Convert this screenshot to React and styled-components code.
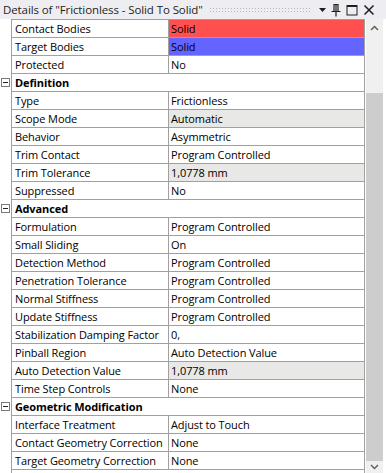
import React from "react";
import styled, { createGlobalStyle } from "styled-components";

const font = `"Open Sans", "Noto Sans", sans-serif`;
const linha = "#a0a0a0";

const Global = createGlobalStyle`
  body {
    margin: 0;
    background: #ffffff;
  }
`;

const Painel = styled.div`
  width: 386px;
  height: 473px;
  overflow: hidden;
  font-family: ${font};
  font-size: 11px;
  letter-spacing: -0.1px;
  color: #000;
  background: #fff;
`;

const Titulo = styled.div`
  height: 19px;
  display: flex;
  align-items: center;
  background: #eeeef2;
  padding-left: 3px;
  gap: 6px;
`;

const TituloTexto = styled.span`
  font-size: 11.5px;
  color: #1e1e1e;
  white-space: nowrap;
`;

const Pontilhado = styled.div`
  flex: 1;
  height: 6px;
  background-image: radial-gradient(circle at 1.5px 1.5px, #b4b4bc 0.6px, transparent 0.9px);
  background-size: 3px 3px;
`;

const Icones = styled.div`
  display: flex;
  align-items: center;
  gap: 3px;
  padding-right: 10px;
`;

const Icone = styled.svg`
  display: block;
`;

const Corpo = styled.div`
  display: flex;
`;

const Margem = styled.div`
  width: 11px;
  padding-top: 1px;
`;

const MargemLinha = styled.div`
  height: 18px;
  display: flex;
  align-items: center;
  justify-content: center;
  padding-left: 1px;
  box-sizing: border-box;
`;

const Menos = styled.div`
  width: 7px;
  height: 7px;
  border: 1px solid #7a7a7a;
  position: relative;
  margin-top: -1px;
  margin-left: -2px;
  &::after {
    content: "";
    position: absolute;
    left: 1px;
    right: 1px;
    top: 3px;
    height: 1px;
    background: #222;
  }
`;

const Tabela = styled.div`
  width: 354px;
  box-sizing: border-box;
  border-top: 1px solid ${linha};
  border-left: 1px solid ${linha};
  border-right: 1px solid ${linha};
`;

const Linha = styled.div`
  display: grid;
  grid-template-columns: 157px 1fr;
  height: 18px;
  box-sizing: border-box;
  border-bottom: 1px solid ${linha};
`;

const Rotulo = styled.div`
  border-right: 1px solid ${linha};
  padding-left: 3px;
  line-height: 17px;
  white-space: nowrap;
  overflow: hidden;
`;

const Valor = styled.div`
  padding-left: 2px;
  line-height: 17px;
  white-space: nowrap;
  overflow: hidden;
  background: ${(p) => p.$fundo || "transparent"};
`;

const Categoria = styled.div`
  height: 18px;
  box-sizing: border-box;
  border-bottom: 1px solid ${linha};
  padding-left: 3px;
  line-height: 17px;
  font-weight: 700;
`;

const Rolagem = styled.div`
  width: 17px;
  margin-left: 1px;
  height: 454px;
  display: flex;
  flex-direction: column;
  background: #f0f0f0;
`;

const Seta = styled.div`
  height: ${(p) => p.$altura}px;
  display: flex;
  align-items: center;
  justify-content: center;
`;

const Trilho = styled.div`
  flex: 1;
  padding-top: 56px;
  display: flex;
`;

const Polegar = styled.div`
  flex: 1;
  background: #cdcdcd;
`;

const cinza = "#e8e8e6";

const secoes = [
  {
    linhas: [
      ["Contact Bodies", "Solid", "#ff5050"],
      ["Target Bodies", "Solid", "#6464ff"],
      ["Protected", "No"],
    ],
  },
  {
    titulo: "Definition",
    linhas: [
      ["Type", "Frictionless"],
      ["Scope Mode", "Automatic", cinza],
      ["Behavior", "Asymmetric"],
      ["Trim Contact", "Program Controlled"],
      ["Trim Tolerance", "1,0778 mm", cinza],
      ["Suppressed", "No"],
    ],
  },
  {
    titulo: "Advanced",
    linhas: [
      ["Formulation", "Program Controlled"],
      ["Small Sliding", "On"],
      ["Detection Method", "Program Controlled"],
      ["Penetration Tolerance", "Program Controlled"],
      ["Normal Stiffness", "Program Controlled"],
      ["Update Stiffness", "Program Controlled"],
      ["Stabilization Damping Factor", "0,"],
      ["Pinball Region", "Auto Detection Value"],
      ["Auto Detection Value", "1,0778 mm", cinza],
      ["Time Step Controls", "None"],
    ],
  },
  {
    titulo: "Geometric Modification",
    linhas: [
      ["Interface Treatment", "Adjust to Touch"],
      ["Contact Geometry Correction", "None"],
      ["Target Geometry Correction", "None"],
    ],
  },
];

export default function App() {
  return (
    <Painel>
      <Global />
      <Titulo>
        <TituloTexto>Details of "Frictionless - Solid To Solid"</TituloTexto>
        <Pontilhado />
        <Icones>
          <Icone width="9" height="6" viewBox="0 0 9 6">
            <path d="M1 1 H8 L4.5 5 Z" fill="#1e1e1e" />
          </Icone>
          <Icone width="12" height="14" viewBox="0 0 12 14">
            <path
              d="M3.5 1.5 H8.5 M4 1.5 V8 M8 1.5 V8 M6 1.5 V8 M1.5 8.5 H10.5 M6 8.5 V13.5"
              stroke="#1e1e1e"
              strokeWidth="1.2"
              fill="none"
            />
          </Icone>
          <Icone width="14" height="14" viewBox="0 0 14 14">
            <rect x="2" y="2.5" width="10" height="9.5" stroke="#1e1e1e" strokeWidth="1" fill="none" />
            <path d="M2 3 H12" stroke="#1e1e1e" strokeWidth="2" />
          </Icone>
          <Icone width="14" height="14" viewBox="0 0 14 14">
            <path d="M2.5 2.5 L11.5 11.5 M11.5 2.5 L2.5 11.5" stroke="#1e1e1e" strokeWidth="1.5" />
          </Icone>
        </Icones>
      </Titulo>
      <Corpo>
        <Margem>
          {secoes.map((s, i) => (
            <React.Fragment key={i}>
              {s.titulo && (
                <MargemLinha>
                  <Menos />
                </MargemLinha>
              )}
              {s.linhas.map((l) => (
                <MargemLinha key={l[0]} />
              ))}
            </React.Fragment>
          ))}
        </Margem>
        <Tabela>
          {secoes.map((s, i) => (
            <React.Fragment key={i}>
              {s.titulo && <Categoria>{s.titulo}</Categoria>}
              {s.linhas.map(([rotulo, valor, fundo]) => (
                <Linha key={rotulo}>
                  <Rotulo>{rotulo}</Rotulo>
                  <Valor $fundo={fundo}>{valor}</Valor>
                </Linha>
              ))}
            </React.Fragment>
          ))}
        </Tabela>
        <Rolagem>
          <Seta $altura={18}>
            <Icone width="9" height="6" viewBox="0 0 9 6">
              <path d="M1 5 L4.5 1.5 L8 5" stroke="#606060" strokeWidth="1.5" fill="none" />
            </Icone>
          </Seta>
          <Trilho>
            <Polegar />
          </Trilho>
          <Seta $altura={12}>
            <Icone width="9" height="6" viewBox="0 0 9 6">
              <path d="M1 1 L4.5 4.5 L8 1" stroke="#606060" strokeWidth="1.5" fill="none" />
            </Icone>
          </Seta>
        </Rolagem>
      </Corpo>
    </Painel>
  );
}
